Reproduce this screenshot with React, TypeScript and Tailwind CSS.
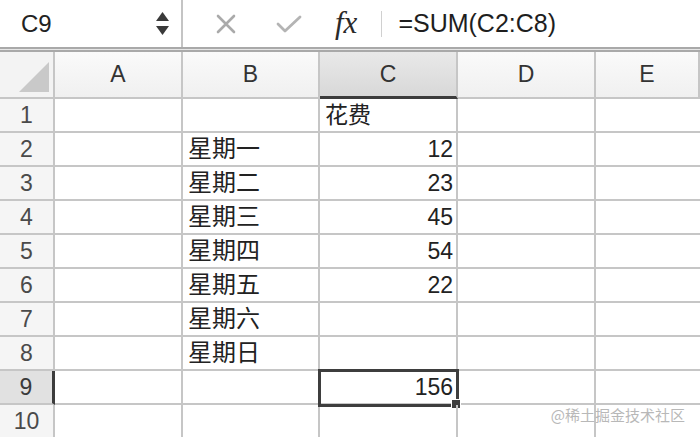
import React from "react";

const cols = ["A", "B", "C", "D", "E"];

const rows: { b?: string; c?: string; cAlign?: "left" | "right" }[] = [
  { c: "花费", cAlign: "left" },
  { b: "星期一", c: "12" },
  { b: "星期二", c: "23" },
  { b: "星期三", c: "45" },
  { b: "星期四", c: "54" },
  { b: "星期五", c: "22" },
  { b: "星期六" },
  { b: "星期日" },
  { c: "156" },
  {},
];

const font = { fontFamily: '"Liberation Sans", Arial, "Noto Sans CJK SC", sans-serif' };

function FormulaBar() {
  return (
    <div className="flex h-[47px] bg-white text-[#222]">
      <div className="flex w-[183px] items-center border-r-2 border-[#c4c4c4] pl-[21px] pr-[12px]">
        <span className="flex-1 text-[24px]">C9</span>
        <div className="flex flex-col items-center gap-[5px]">
          <svg width="13" height="9" viewBox="0 0 13 9">
            <path d="M6.5 0 L13 9 L0 9 Z" fill="#3a3a3a" />
          </svg>
          <svg width="13" height="9" viewBox="0 0 13 9">
            <path d="M0 0 L13 0 L6.5 9 Z" fill="#3a3a3a" />
          </svg>
        </div>
      </div>
      <div className="flex items-center">
        <svg className="ml-[33px]" width="20" height="20" viewBox="0 0 20 20">
          <path d="M2 2 L18 18 M18 2 L2 18" stroke="#aaaaaa" strokeWidth="2.6" strokeLinecap="round" />
        </svg>
        <svg className="ml-[40px]" width="26" height="20" viewBox="0 0 26 20">
          <path d="M2 10 L9 17 L24 3" stroke="#b4b4b4" strokeWidth="2.8" fill="none" strokeLinecap="round" strokeLinejoin="round" />
        </svg>
        <span
          className="ml-[33px] text-[31px] italic text-[#2a2a2a]"
          style={{ fontFamily: '"Liberation Serif", "Times New Roman", serif' }}
        >
          fx
        </span>
        <div className="ml-[24px] h-[26px] w-px bg-[#d0d0d0]" />
        <span className="ml-[16px] text-[25px] text-[#1e1e1e]">=SUM(C2:C8)</span>
      </div>
    </div>
  );
}

export default function App() {
  return (
    <div className="h-[437px] w-[700px] overflow-hidden bg-white" style={font}>
      <FormulaBar />
      {/* double rule under the formula bar */}
      <div className="h-[5px] border-y-2 border-[#a9a9a9] bg-[#e6e6e6]" />

      <div className="relative grid grid-cols-[55px_128px_137px_138px_138px_1fr]">
        {/* header row */}
        <div className="flex h-[47px] items-end justify-end border-r-2 border-b-2 border-[#c6c6c6] bg-[#f3f3f3] pb-[5px] pr-[4px]">
          <svg width="30" height="30" viewBox="0 0 30 30">
            <path d="M30 0 L30 30 L0 30 Z" fill="#c9c9c9" />
          </svg>
        </div>
        {cols.map((c) =>
          c === "C" ? (
            <div
              key={c}
              className="flex h-[47px] items-center justify-center border-r-2 border-b-[3px] border-r-[#c6c6c6] border-b-[#3c3c3c] bg-gradient-to-b from-[#e9e9e9] to-[#d8d8d8] text-[23px] text-[#333]"
            >
              {c}
            </div>
          ) : (
            <div
              key={c}
              className="flex h-[47px] items-center justify-center border-r-2 border-b-2 border-[#c6c6c6] bg-gradient-to-b from-[#fafafa] to-[#f0f0f0] text-[23px] text-[#333]"
            >
              {c}
            </div>
          )
        )}

        {rows.map((r, i) => {
          const n = i + 1;
          const selected = n === 9;
          return (
            <React.Fragment key={n}>
              <div
                className={
                  selected
                    ? "flex h-[34px] items-center justify-center border-r-[3px] border-b-2 border-r-[#3c3c3c] border-b-[#c6c6c6] bg-[#e1e1e1] text-[23px] text-[#3a3a3a]"
                    : "flex h-[34px] items-center justify-center border-r-2 border-b-2 border-[#c6c6c6] bg-[#f5f5f5] text-[23px] text-[#4a4a4a]"
                }
              >
                {n}
              </div>
              <div className="h-[34px] border-r-2 border-b-2 border-[#c6c6c6]" />
              <div className="flex h-[34px] items-center border-r-2 border-b-2 border-[#c6c6c6] pl-[5px] text-[24px] text-[#222]">
                {r.b}
              </div>
              <div
                className={
                  "relative flex h-[34px] items-center border-r-2 border-b-2 border-[#c6c6c6] text-[23px] text-[#222] " +
                  (r.cAlign === "left" ? "justify-start pl-[5px]" : "justify-end pr-[3px]")
                }
              >
                {r.c}
                {selected && (
                  <>
                    <div className="pointer-events-none absolute -left-[2px] -top-[2px] h-[38px] w-[141px] border-[3px] border-[#3e3e3e]" />
                    <div className="absolute -bottom-[5px] -right-[4px] h-[8px] w-[8px] bg-[#3e3e3e] outline outline-1 outline-white" />
                  </>
                )}
              </div>
              <div className="h-[34px] border-r-2 border-b-2 border-[#c6c6c6]" />
              <div className="h-[34px] border-b-2 border-[#c6c6c6]" />
            </React.Fragment>
          );
        })}

        {/* watermark */}
        <span className="absolute right-[15px] top-[352px] text-[15px] text-[#b8b8b8]" style={{ fontFamily: '"Noto Sans CJK SC", sans-serif' }}>
          @稀土掘金技术社区
        </span>
      </div>
    </div>
  );
}
